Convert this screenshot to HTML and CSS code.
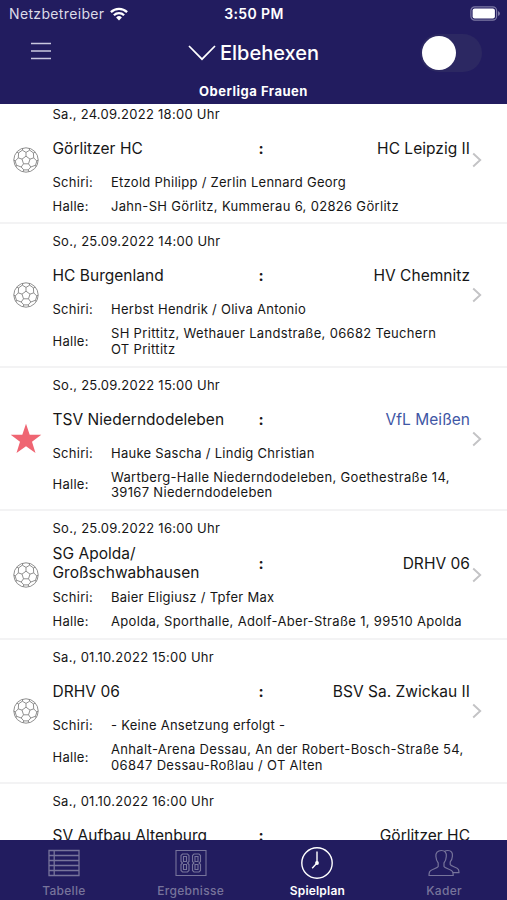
FILE: index.html
```html
<!DOCTYPE html>
<html lang="de">
<head>
<meta charset="utf-8">
<title>Spielplan</title>
<link rel="stylesheet" href="styles.css">
</head>
<body>
<svg class="defs" width="0" height="0">
  <symbol id="ball" viewBox="0 0 26 26">
    <g fill="none" stroke="#7c7c7c" stroke-width=".85">
      <circle cx="13" cy="13" r="12.2"/>
      <path d="M13 9.200l4 2.900-1.500 4.700h-5L9 12.100zM13 9.200V5.400M17 12.100l3.700-1.200M15.500 16.800l2.300 3.200M10.500 16.800 8.200 20M9 12.100l-3.700-1.200M13 5.400 9.300 3.200M13 5.400l3.700-2.200M9.300 3.200 5.600 5.900l-.3 5M16.700 3.200l3.700 2.700.3 5M5.300 10.900 2.200 14l1.200 4.200L8.200 20M20.700 10.900l3.100 3.100-1.200 4.200-4.800 1.800M8.200 20l2.600 2.900h4.400l2.600-2.900M9.300 3.200l.6-2M16.700 3.200l-.6-2M5.600 5.900 3.900 5.200M20.400 5.900l1.700-.7M2.200 14l-1.300-.9M23.800 14l1.300-.9M3.400 18.200l-.5 1.500M22.600 18.200l.5 1.500M10.800 22.900l-.8 1.800M15.200 22.900l.8 1.800"/>
    </g>
  </symbol>
  <symbol id="star" viewBox="0 0 32 32"><path fill="#ef6572" d="m16 .8 3.700 10.900 11.600.1-9.300 6.900 3.500 11.200L16 23.200l-9.500 6.700L10 18.700.7 11.800l11.600-.1z"/></symbol>
  <symbol id="chev" viewBox="0 0 10 16"><path d="m1.200 1.500 7 6.500-7 6.500" fill="none" stroke="#c3c3c5" stroke-width="1.900"/></symbol>
</svg>
<div class="app">
  <header class="header">
    <div class="status">
      <div class="carrier"><span>Netzbetreiber</span>
        <svg width="18" height="14" viewBox="0 0 18 14"><g fill="none" stroke="#fff" stroke-width="2.300"><path d="M.9 5.100a11.600 11.600 0 0 1 16.200 0M3.900 8.300a7.300 7.300 0 0 1 10.200 0"/></g><path fill="#fff" d="M6.100 10.500a4.200 4.200 0 0 1 5.800 0L9 13.500z"/></svg>
      </div>
      <div class="time">3:50 PM</div>
      <svg class="battery" width="31" height="15" viewBox="0 0 31 15"><rect x=".9" y=".9" width="25.700" height="13.200" rx="3.800" fill="none" stroke="#7d79a5" stroke-width="1.200"/><rect x="2.600" y="2.600" width="22.300" height="9.800" rx="2" fill="#fff"/><path d="M28 5v5q2-1 2-2.500T28 5z" fill="#7d79a5"/></svg>
    </div>
    <div class="nav">
      <svg class="burger" width="20" height="18" viewBox="0 0 20 18"><path d="M0 1.500h20M0 9h20M0 16.500h20" stroke="#c9c7df" stroke-width="1.300"/></svg>
      <div class="title"><svg width="28" height="16" viewBox="0 0 28 16"><path d="m1 1 13 13.200L27 1" fill="none" stroke="#fff" stroke-width="1.700"/></svg><span>Elbehexen</span></div>
      <div class="switch"><div class="knob"></div></div>
    </div>
    <div class="league">Oberliga Frauen</div>
  </header>
  <main class="list">
    <section class="game first">
      <div class="mark"><svg width="26" height="26"><use href="#ball"/></svg></div>
      <div class="body">
        <div class="date">Sa., 24.09.2022 18:00 Uhr</div>
        <div class="teams"><div class="home">Görlitzer HC</div><b>:</b><div class="away">HC Leipzig II</div></div>
        <div class="info"><span>Schiri:</span><p>Etzold Philipp / Zerlin Lennard Georg</p></div>
        <div class="info hall"><span>Halle:</span><p>Jahn-SH Görlitz, Kummerau 6, 02826 Görlitz</p></div>
      </div>
      <svg class="chev" width="10" height="16"><use href="#chev"/></svg>
    </section>
    <section class="game">
      <div class="mark"><svg width="26" height="26"><use href="#ball"/></svg></div>
      <div class="body">
        <div class="date">So., 25.09.2022 14:00 Uhr</div>
        <div class="teams"><div class="home">HC Burgenland</div><b>:</b><div class="away">HV Chemnitz</div></div>
        <div class="info"><span>Schiri:</span><p>Herbst Hendrik / Oliva Antonio</p></div>
        <div class="info hall"><span>Halle:</span><p>SH Prittitz, Wethauer Landstraße, 06682 Teuchern<br>OT Prittitz</p></div>
      </div>
      <svg class="chev" width="10" height="16"><use href="#chev"/></svg>
    </section>
    <section class="game">
      <div class="mark"><svg width="32" height="32"><use href="#star"/></svg></div>
      <div class="body">
        <div class="date">So., 25.09.2022 15:00 Uhr</div>
        <div class="teams"><div class="home">TSV Niederndodeleben</div><b>:</b><div class="away own">VfL Meißen</div></div>
        <div class="info"><span>Schiri:</span><p>Hauke Sascha / Lindig Christian</p></div>
        <div class="info hall"><span>Halle:</span><p>Wartberg-Halle Niederndodeleben, Goethestraße 14,<br>39167 Niederndodeleben</p></div>
      </div>
      <svg class="chev" width="10" height="16"><use href="#chev"/></svg>
    </section>
    <section class="game tall">
      <div class="mark"><svg width="26" height="26"><use href="#ball"/></svg></div>
      <div class="body">
        <div class="date">So., 25.09.2022 16:00 Uhr</div>
        <div class="teams"><div class="home">SG Apolda/<br>Großschwabhausen</div><b>:</b><div class="away">DRHV 06</div></div>
        <div class="info"><span>Schiri:</span><p>Baier Eligiusz / Tpfer Max</p></div>
        <div class="info hall"><span>Halle:</span><p>Apolda, Sporthalle, Adolf-Aber-Straße 1, 99510 Apolda</p></div>
      </div>
      <svg class="chev" width="10" height="16"><use href="#chev"/></svg>
    </section>
    <section class="game">
      <div class="mark"><svg width="26" height="26"><use href="#ball"/></svg></div>
      <div class="body">
        <div class="date">Sa., 01.10.2022 15:00 Uhr</div>
        <div class="teams"><div class="home">DRHV 06</div><b>:</b><div class="away">BSV Sa. Zwickau II</div></div>
        <div class="info"><span>Schiri:</span><p>- Keine Ansetzung erfolgt -</p></div>
        <div class="info hall"><span>Halle:</span><p>Anhalt-Arena Dessau, An der Robert-Bosch-Straße 54,<br>06847 Dessau-Roßlau / OT Alten</p></div>
      </div>
      <svg class="chev" width="10" height="16"><use href="#chev"/></svg>
    </section>
    <section class="game last">
      <div class="mark"></div>
      <div class="body">
        <div class="date">Sa., 01.10.2022 16:00 Uhr</div>
        <div class="teams"><div class="home">SV Aufbau Altenburg</div><b>:</b><div class="away">Görlitzer HC</div></div>
      </div>
      <svg class="chev" width="10" height="16"><use href="#chev"/></svg>
    </section>
  </main>
  <nav class="tabs">
    <div class="tab"><svg width="34" height="34" viewBox="0 0 34 34"><path d="M2 4.500h30v25H2zM7.200 4.500v25M2 9.500h30M2 14.500h30M2 19.500h30M2 24.500h30" fill="none" stroke="#77749b" stroke-width="1.300"/></svg><span>Tabelle</span></div>
    <div class="tab"><svg width="34" height="34" viewBox="0 0 34 34"><g fill="none" stroke="#77749b" stroke-width="1.100"><path d="M2 4.500h30v25H2z"/><path id="digit" d="M8.500 8h5l1.500 1.500v6L13.500 17l1.500 1.500v6L13.500 26h-5L7 24.500v-6L8.500 17 7 15.500v-6zM9.500 10.500h3v5h-3zM9.500 18.500h3v5h-3z"/><use href="#digit" x="11.500"/></g></svg><span>Ergebnisse</span></div>
    <div class="tab active"><svg width="34" height="34" viewBox="0 0 34 34"><circle cx="17" cy="17" r="15.200" fill="none" stroke="#fff" stroke-width="1.400"/><path d="M17 5.500V17l-4.800 5.200" fill="none" stroke="#fff" stroke-width="1.400"/><circle cx="17" cy="17" r="1.900" fill="#fff"/></svg><span>Spielplan</span></div>
    <div class="tab"><svg width="34" height="34" viewBox="0 0 34 34"><g fill="none" stroke="#77749b" stroke-width="1.200" stroke-linejoin="round"><path d="M14.300 4.500c3.700 0 5.400 2.600 5 6-.2 3-1 5-2.300 6.500v3.500c1 2 7.800 2.700 8.700 5.500.5 1.500.5 3.500.5 3.500H2s0-2 .5-3.500c1-2.800 7.700-3.500 8.700-5.500V17c-1.300-1.500-2.100-3.500-2.300-6.500-.4-3.400 1.700-6 5.400-6z"/><path d="M17.300 5.500c1-.7 2.200-1 3.500-1 3.700 0 5 2.600 4.600 5.700-.2 2.600-1 4.300-2.200 5.600v2.800c1 2 7 2.400 8.200 5 .5 1.200.6 3.100.6 3.100h-6"/></g></svg><span>Kader</span></div>
  </nav>
</div>
</body>
</html>
```
FILE: styles.css
```css
* { box-sizing: border-box; margin: 0; padding: 0; }
body { font-family: Inter, "Liberation Sans", sans-serif; color: #161616; background: #fff; }
svg { display: block; flex: none; }
.defs { position: absolute; }
.app { display: flex; flex-direction: column; width: 507px; height: 900px; overflow: hidden; }
.header { flex: none; height: 104px; background: #221c5f; color: #fff; }
.status { display: grid; grid-template-columns: 1fr auto 1fr; align-items: center; height: 27px; padding: 0 6px 0 9px; font-size: 14px; }
.carrier { display: flex; align-items: center; gap: 6px; letter-spacing: .35px; color: #dcdbe8; }
.time { font-weight: 600; letter-spacing: .4px; margin-left: -2px; }
.battery { justify-self: end; }
.nav { display: grid; grid-template-columns: 1fr auto 1fr; align-items: center; height: 51px; padding: 0 25px 0 31px; }
.burger { margin-top: -3px; }
.title { display: flex; align-items: center; gap: 4px; margin-left: -6px; font-size: 20px; font-weight: 500; }
.switch { justify-self: end; width: 62px; height: 38px; border-radius: 19px; background: #2c2862; padding: 2px; }
.knob { width: 34px; height: 34px; border-radius: 50%; background: #fff; }
.league { font-size: 13px; font-weight: 700; line-height: 27px; text-align: center; letter-spacing: .5px; }
.list { flex: 1; min-height: 0; overflow: hidden; }
.game { display: flex; height: 143.500px; border-bottom: 2px solid #f3f3f4; padding-right: 25px; }
.game.first { height: 128px; margin-top: -8px; }
.first .body { padding-top: 10px; }
.game.tall { height: 129px; }
.mark { flex: none; width: 52.500px; display: flex; align-items: center; justify-content: center; padding-top: 1px; }
.body { flex: 1; padding-top: 9px; font-size: 13px; letter-spacing: .27px; }
.date { line-height: 16px; }
.teams { display: grid; grid-template-columns: 200px 17px 1fr; align-items: center; height: 38px; margin-top: 7.500px; font-size: 15.500px; line-height: 19px; letter-spacing: .03px; }
.tall .teams { margin-top: 8px; }
.teams b { text-align: center; }
.away { text-align: right; white-space: nowrap; }
.own { color: #3f57a5; }
.info { display: grid; grid-template-columns: 58.500px 1fr; align-items: center; margin-top: 7.500px; line-height: 15.500px; white-space: nowrap; }
.hall { margin-top: 8.500px; }
.first .info { margin-top: 7px; }
.first .hall { margin-top: 8.500px; }
.tall .hall { margin-top: 8.500px; }
.hall p { letter-spacing: .32px; }
.chev { align-self: center; margin: 1px 0 0 2px; }
.tabs { flex: none; display: grid; grid-template-columns: repeat(4, 1fr); height: 60px; background: #221c5f; }
.tab { display: flex; flex-direction: column; align-items: center; padding: 6px 0 0 1px; color: #77749b; font-size: 12px; font-weight: 500; line-height: 15px; letter-spacing: .3px; }
.tab span { margin-top: 3px; }
.active { color: #fff; font-weight: 600; letter-spacing: .2px; }
```
